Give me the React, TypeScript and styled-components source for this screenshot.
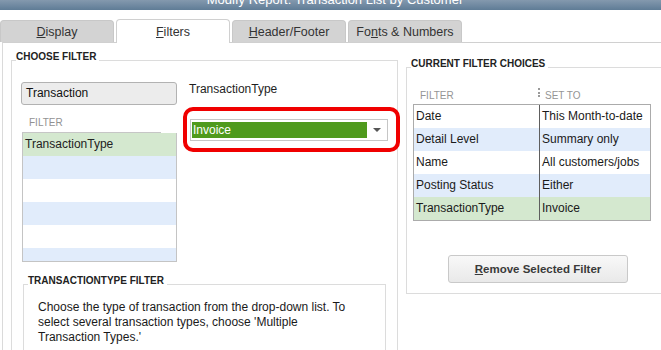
import React from 'react';
import styled, { createGlobalStyle } from 'styled-components';

const Global = createGlobalStyle`
  html, body { margin: 0; padding: 0; background: #fff; }
  body { font-family: "Liberation Sans", Arial, sans-serif; }
  * { box-sizing: border-box; }
`;

const Window = styled.div`
  width: 661px;
  height: 350px;
  overflow: hidden;
  background: #fff;
  font-family: "Liberation Sans", Arial, sans-serif;
  color: #1e1e1e;
`;

const TitleBar = styled.div`
  height: 10px;
  overflow: hidden;
  background: linear-gradient(#8499ae, #5f7c96);
  display: flex;
  justify-content: center;
  padding-left: 9px;
`;

const TitleText = styled.span`
  margin-top: -8.5px;
  font-size: 13px;
  line-height: 15px;
  color: #fff;
  white-space: nowrap;
`;

const TabStrip = styled.div`
  display: flex;
  align-items: flex-end;
  gap: 2px;
  height: 32px;
  padding-top: 9px;
  position: relative;
  z-index: 1;
`;

const Tab = styled.div<{ $active?: boolean }>`
  width: 114px;
  height: ${p => (p.$active ? 24 : 22)}px;
  margin-bottom: ${p => (p.$active ? -1 : 0)}px;
  background: ${p => (p.$active ? '#fff' : '#d3d3d3')};
  border: 1px solid ${p => (p.$active ? '#d0d0d0' : '#c8c8c8')};
  border-bottom: none;
  border-radius: 4px 4px 0 0;
  display: flex;
  align-items: center;
  justify-content: center;
  font-size: 12.5px;
  color: #333;
  white-space: nowrap;
`;

const Panel = styled.div`
  margin-left: 2px;
  border-top: 1px solid #d0d0d0;
  border-left: 1px solid #dadada;
  display: flex;
  align-items: flex-start;
  padding-left: 8px;
  height: 400px;
`;

const Group = styled.section<{ $width: number; $top: number; $left?: number }>`
  width: ${p => p.$width}px;
  margin-top: ${p => p.$top}px;
  margin-left: ${p => p.$left ?? 0}px;
  display: flex;
  flex-direction: column;
  flex-shrink: 0;
`;

const GroupHead = styled.div`
  display: flex;
  align-items: flex-start;
  height: 9px;
  &::before {
    content: '';
    width: 5px;
    height: 9px;
    flex-shrink: 0;
    border-bottom: 1px solid #dcdcdc;
  }
  &::after {
    content: '';
    flex: 1;
    height: 9px;
    margin-left: 3px;
    border-bottom: 1px solid #dcdcdc;
  }
`;

const GroupLabel = styled.span`
  font-size: 10px;
  font-weight: bold;
  line-height: 11px;
  color: #222;
  white-space: nowrap;
`;

const GroupBody = styled.div`
  border: 1px solid #dcdcdc;
  border-top: none;
`;

const ChooseBody = styled(GroupBody)`
  display: grid;
  grid-template-columns: 156px auto;
  column-gap: 6px;
  align-items: start;
  padding: 22px 0 0 9px;
  height: 320px;
`;

const FilterColumn = styled.div`
  display: flex;
  flex-direction: column;
`;

const SearchBox = styled.div`
  height: 23px;
  border: 1px solid #b2b2b2;
  border-radius: 3px;
  background: #ececec;
  font-size: 12px;
  line-height: 21px;
  padding-left: 4px;
  color: #111;
`;

const ListHead = styled.div`
  width: 139px;
  margin-left: 1px;
  height: 28px;
  padding: 12px 0 0 7px;
  border-bottom: 1px solid #c6c6c6;
  font-size: 10px;
  line-height: 12px;
  color: #929292;
`;

const List = styled.div`
  width: 155px;
  margin-left: 1px;
  height: 129px;
  border: 1px solid #c4c4c4;
  border-top: none;
  overflow: hidden;
`;

const ListRow = styled.div<{ $tone: 'green' | 'blue' | 'white' }>`
  height: 23px;
  flex-shrink: 0;
  font-size: 12px;
  line-height: 23px;
  padding-left: 2px;
  color: #222;
  background: ${p => (p.$tone === 'green' ? '#d4e8cf' : p.$tone === 'blue' ? '#e1ecfb' : '#fff')};
`;

const ChoiceColumn = styled.div`
  display: flex;
  flex-direction: column;
`;

const FieldLabel = styled.div`
  margin-left: 6px;
  font-size: 12px;
  line-height: 14px;
  color: #1e1e1e;
`;

const RedFrame = styled.div`
  margin-top: 11px;
  width: 217px;
  height: 45px;
  border: 4px solid #f00000;
  border-radius: 10px;
  padding: 8px 0 0 3px;
  position: relative;
`;

const Select = styled.div`
  width: 198px;
  height: 22px;
  border: 1px solid #c6c6c6;
  background: #fff;
  display: flex;
  padding: 2px 0 2px 1px;
`;

const SelectValue = styled.div`
  width: 175px;
  background: #4f9a1d;
  color: #fff;
  font-size: 12px;
  line-height: 16px;
  padding-left: 1px;
`;

const SelectArrow = styled.div`
  flex: 1;
  display: flex;
  align-items: center;
  justify-content: center;
  svg { display: block; }
`;

const DescGroup = styled(Group)`
  grid-column: 1 / -1;
`;

const DescBody = styled(GroupBody)`
  padding: 16px 0 0 14px;
  height: 120px;
`;

const DescText = styled.p`
  margin: 0;
  max-width: 320px;
  font-size: 12px;
  line-height: 15px;
  color: #1a1a1a;
`;

const CurrentBody = styled(GroupBody)`
  padding: 23px 0 10px 6px;
`;

const TableHeader = styled.div`
  display: grid;
  grid-template-columns: 126px 1fr;
  width: 238px;
  height: 14px;
  font-size: 10px;
  line-height: 12px;
  color: #959595;
`;

const HeadCell = styled.div`
  display: flex;
  align-items: flex-start;
  padding-left: 7px;
`;

const HeadSep = styled.span`
  width: 2px;
  height: 9px;
  margin: -2px 5px 0 -8px;
  background: repeating-linear-gradient(#9a9a9a 0 2px, transparent 2px 3.5px);
`;

const Table = styled.div`
  width: 238px;
  border: 1px solid #ababab;
`;

const TableRow = styled.div<{ $tone: 'green' | 'blue' | 'white' }>`
  display: grid;
  grid-template-columns: 126px 1fr;
  height: 23px;
  font-size: 12px;
  line-height: 23px;
  color: #1a1a1a;
  background: ${p => (p.$tone === 'green' ? '#d4e8cf' : p.$tone === 'blue' ? '#e1ecfb' : '#fff')};
`;

const Cell = styled.div<{ $first?: boolean }>`
  padding-left: 2px;
  white-space: nowrap;
  overflow: hidden;
  border-right: ${p => (p.$first ? '1px solid #5e5e5e' : 'none')};
`;

const Button = styled.button`
  display: block;
  margin: 34px 0 0 35px;
  width: 180px;
  height: 28px;
  border: 1px solid #c9c9c9;
  border-radius: 3px;
  background: linear-gradient(#f8f8f8, #e9e9e9);
  font-family: "Liberation Sans", Arial, sans-serif;
  font-size: 11.5px;
  font-weight: bold;
  color: #3a3a3a;
  padding: 0;
`;

const filterRows: Array<[string, string, 'green' | 'blue' | 'white']> = [
  ['Date', 'This Month-to-date', 'white'],
  ['Detail Level', 'Summary only', 'blue'],
  ['Name', 'All customers/jobs', 'white'],
  ['Posting Status', 'Either', 'blue'],
  ['TransactionType', 'Invoice', 'green'],
];

const listRows: Array<['green' | 'blue' | 'white', string]> = [
  ['green', 'TransactionType'],
  ['blue', ''],
  ['white', ''],
  ['blue', ''],
  ['white', ''],
  ['blue', ''],
];

export default function App() {
  return (
    <Window>
      <Global />
      <TitleBar>
        <TitleText>Modify Report: Transaction List by Customer</TitleText>
      </TitleBar>
      <TabStrip>
        <Tab><u>D</u>isplay</Tab>
        <Tab $active><u>F</u>ilters</Tab>
        <Tab><u>H</u>eader/Footer</Tab>
        <Tab>Fo<u>n</u>ts &amp; Numbers</Tab>
      </TabStrip>
      <Panel>
        <Group $width={387} $top={8}>
          <GroupHead>
            <GroupLabel>CHOOSE FILTER</GroupLabel>
          </GroupHead>
          <ChooseBody>
            <FilterColumn>
              <SearchBox>Transaction</SearchBox>
              <ListHead>FILTER</ListHead>
              <List>
                {listRows.map(([tone, text], i) => (
                  <ListRow key={i} $tone={tone}>{text}</ListRow>
                ))}
              </List>
            </FilterColumn>
            <ChoiceColumn>
              <FieldLabel>TransactionType</FieldLabel>
              <RedFrame>
                <Select>
                  <SelectValue>Invoice</SelectValue>
                  <SelectArrow>
                    <svg width="8" height="4" viewBox="0 0 8 4">
                      <path d="M0 0h8L4 4z" fill="#555" />
                    </svg>
                  </SelectArrow>
                </Select>
              </RedFrame>
            </ChoiceColumn>
            <DescGroup $width={363} $top={13} $left={2}>
              <GroupHead>
                <GroupLabel>TRANSACTIONTYPE FILTER</GroupLabel>
              </GroupHead>
              <DescBody>
                <DescText>
                  Choose the type of transaction from the drop-down list. To select several
                  transaction types, choose 'Multiple Transaction Types.'
                </DescText>
              </DescBody>
            </DescGroup>
          </ChooseBody>
        </Group>
        <Group $width={270} $top={15} $left={8}>
          <GroupHead>
            <GroupLabel>CURRENT FILTER CHOICES</GroupLabel>
          </GroupHead>
          <CurrentBody>
            <TableHeader>
              <HeadCell>FILTER</HeadCell>
              <HeadCell>
                <HeadSep />
                SET TO
              </HeadCell>
            </TableHeader>
            <Table>
              {filterRows.map(([f, v, tone]) => (
                <TableRow key={f} $tone={tone}>
                  <Cell $first>{f}</Cell>
                  <Cell>{v}</Cell>
                </TableRow>
              ))}
            </Table>
            <Button>
              <u>R</u>emove Selected Filter
            </Button>
          </CurrentBody>
        </Group>
      </Panel>
    </Window>
  );
}
